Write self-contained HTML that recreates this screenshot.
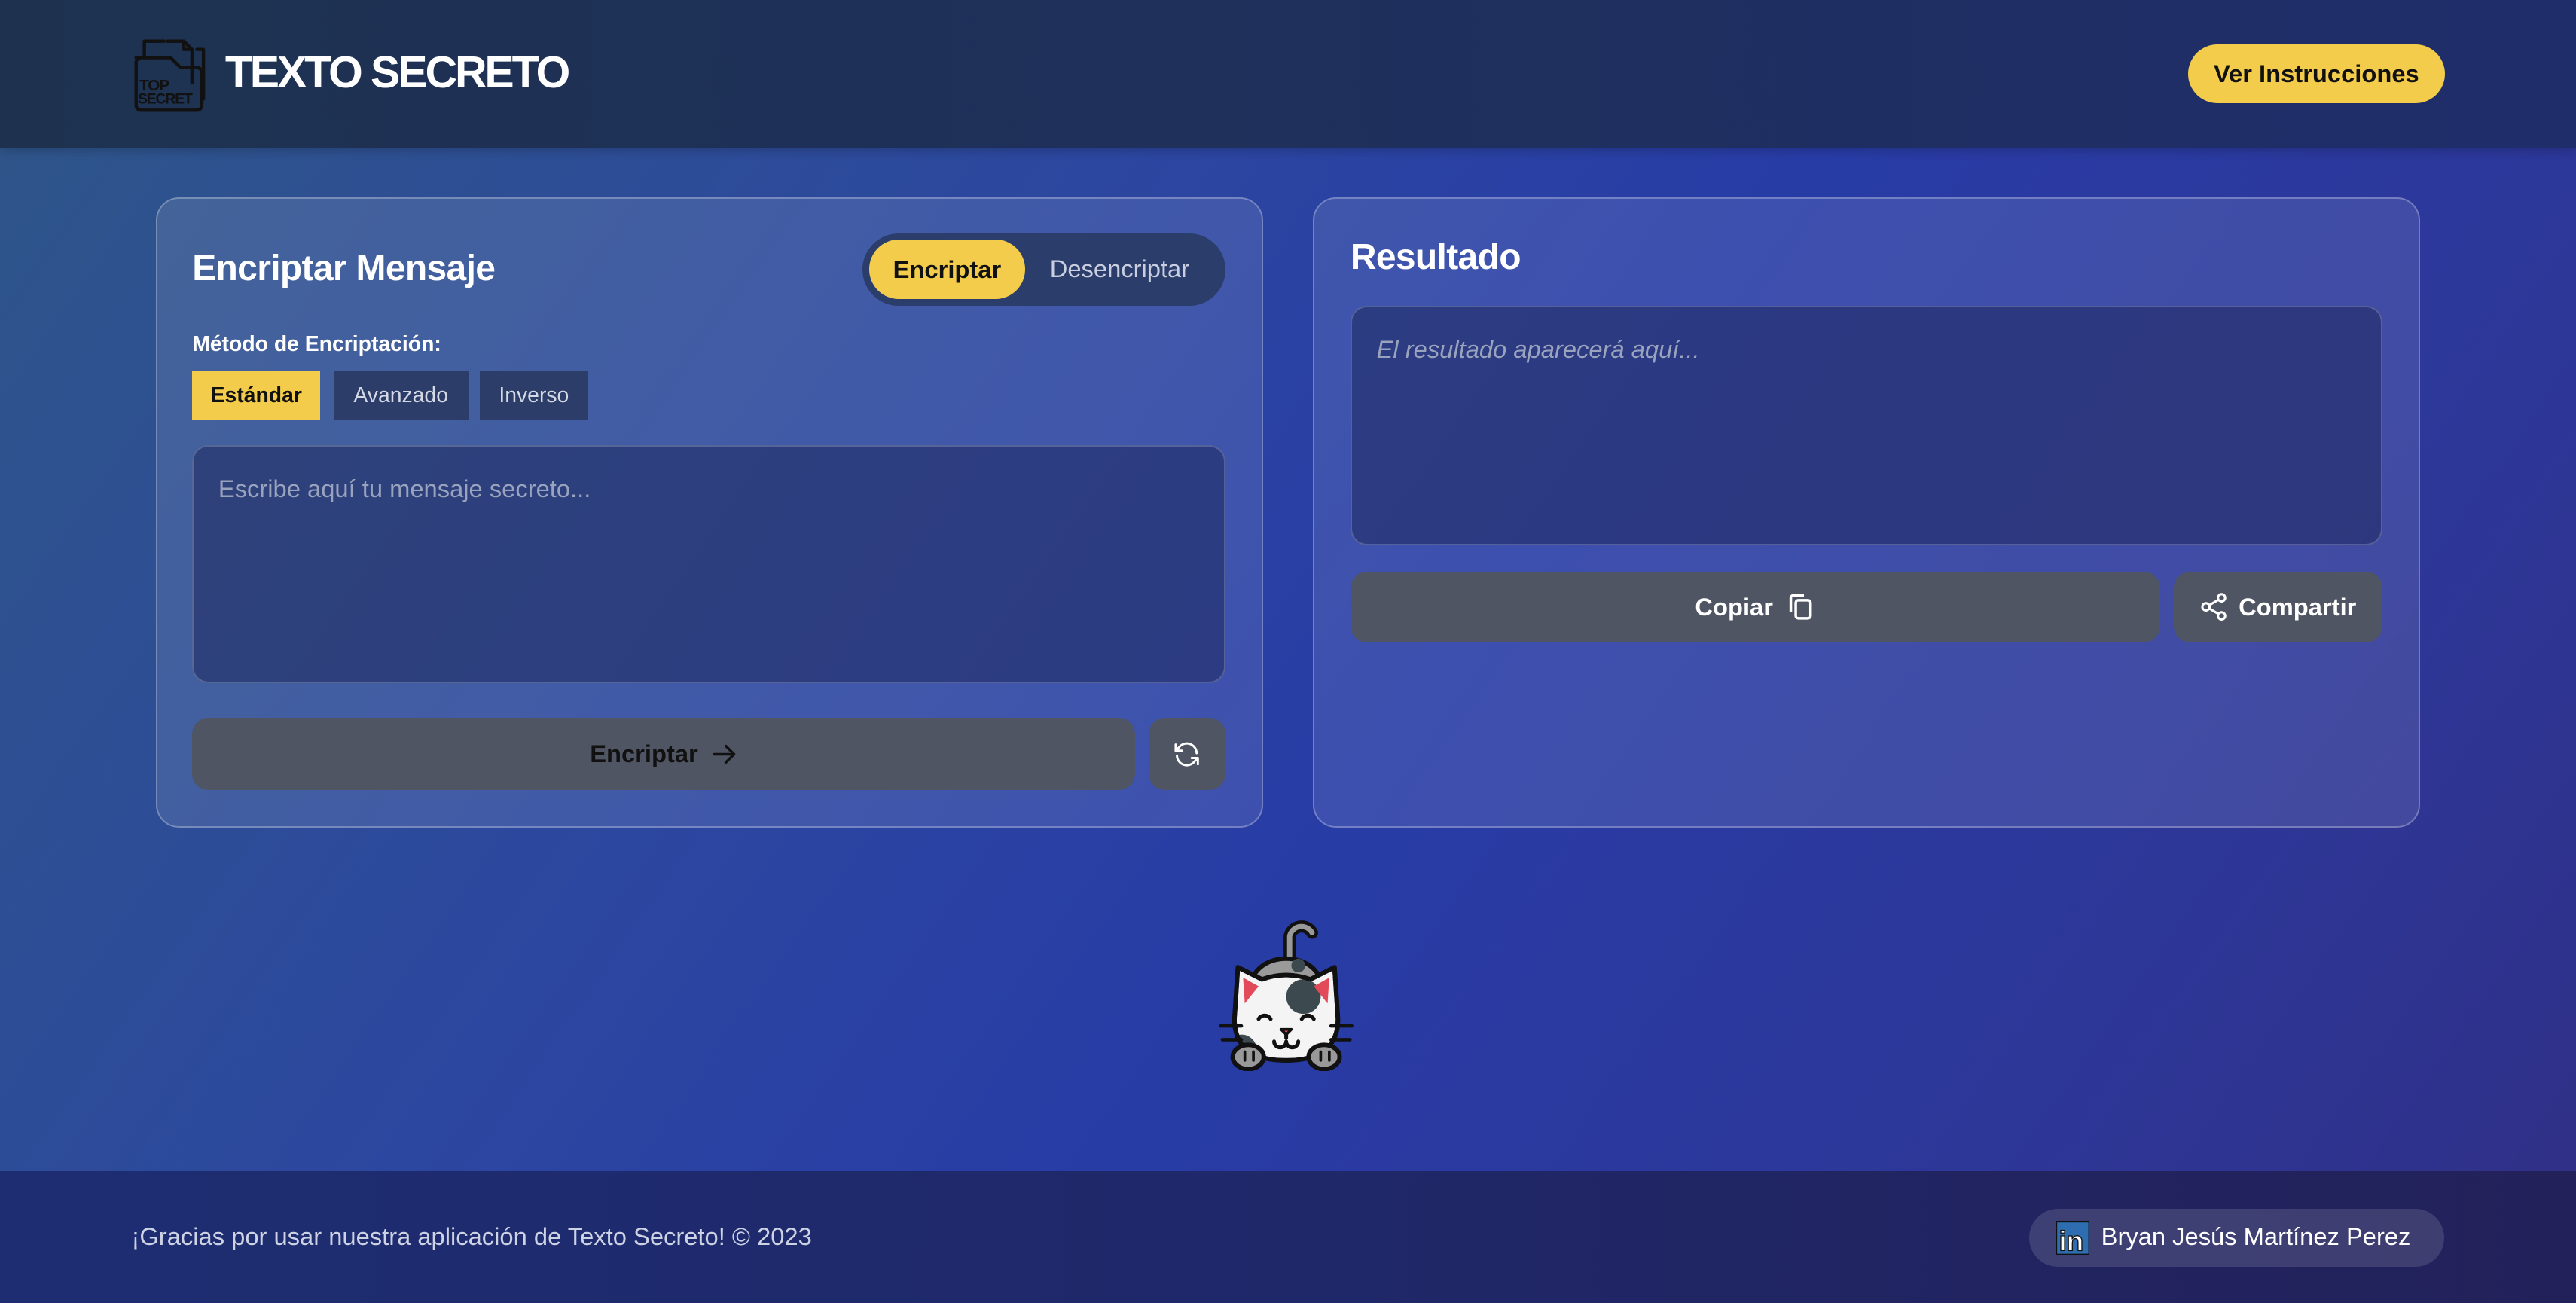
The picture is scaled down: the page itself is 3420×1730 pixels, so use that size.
<!DOCTYPE html>
<html><head><meta charset="utf-8"><style>
html,body{margin:0;padding:0;width:3420px;height:1730px;overflow:hidden}
body{font-family:"Liberation Sans",sans-serif;background:#2a3ea8}
#z{zoom:2.181122;width:1568px;height:793.2px;position:relative;overflow:hidden;
background:linear-gradient(125deg,#2f5688 0%,#2c47a0 35%,#283ca6 55%,#2d3798 80%,#302f85 100%)}
.abs{position:absolute}
header{position:absolute;left:0;top:0;width:1568px;height:90px;background:linear-gradient(90deg,#1e3250,#1f2f5e 60%,#1f2d6b);box-shadow:0 2px 6px rgba(0,0,0,.2)}
.title{left:137px;top:29px;font-size:27px;font-weight:bold;color:#fff;letter-spacing:-1.4px}
.btnY{background:#f2cc4a;color:#111;font-weight:bold;display:flex;align-items:center;justify-content:center}
.panel{background:rgba(255,255,255,.1);border:1px solid rgba(255,255,255,.28);border-radius:14px;box-sizing:border-box}
.h2{font-size:22px;font-weight:bold;color:#fff;letter-spacing:-0.3px}
.ta{background:rgba(30,40,95,.55);border:1px solid rgba(255,255,255,.2);border-radius:10px;box-sizing:border-box;color:#9aa3bd;font-size:15px;padding:17px 15px}
.gb{background:#4f5563;border-radius:10px;color:#fff;font-weight:bold;font-size:15px;display:flex;align-items:center;justify-content:center;gap:8px}
.m{top:226px;height:30px;font-size:13px;display:flex;align-items:center;justify-content:center;background:#2b3d68;color:#d5d9e6}
footer{position:absolute;left:0;top:713px;width:1568px;height:81px;background:linear-gradient(90deg,#1e2d72,#1f2869 50%,#23215a)}
</style></head><body><div id="z">
<header>
<svg class="abs" style="left:79px;top:21px" width="48" height="48" viewBox="0 0 48 48" fill="none" stroke="#111" stroke-width="2" stroke-linecap="round" stroke-linejoin="round">
<path d="M9 14V4h12M23 4h10l5 5v20"/>
<path d="M33 4v5h5M41 9h4v30"/>
<path d="M4 14h21l6 6h10a3 3 0 0 1 3 3v20a3 3 0 0 1-3 3H7a3 3 0 0 1-3-3V17a3 3 0 0 1 3-3z"/>
<text x="6" y="34" font-family="Liberation Sans" font-size="9.5" fill="#111" stroke="none" font-weight="bold" letter-spacing="-0.5">TOP</text>
<text x="5" y="42" font-family="Liberation Sans" font-size="9" fill="#111" stroke="none" font-weight="bold" letter-spacing="-0.6">SECRET</text>
</svg>
<div class="abs title">TEXTO SECRETO</div>
<div class="abs btnY" style="left:1332px;top:27px;width:156px;height:36px;border-radius:18px;font-size:15px">Ver Instrucciones</div>
</header>

<div class="abs panel" style="left:95px;top:120px;width:674px;height:384px"></div>
<div class="abs h2" style="left:117px;top:151px">Encriptar Mensaje</div>
<div class="abs" style="left:525px;top:142px;width:221px;height:44px;border-radius:22px;background:#2b3d6b"></div>
<div class="abs btnY" style="left:529px;top:146px;width:95px;height:36px;border-radius:18px;font-size:15px">Encriptar</div>
<div class="abs" style="left:639px;top:155px;font-size:15px;color:#c9cfe0">Desencriptar</div>
<div class="abs" style="left:117px;top:202px;font-size:13px;font-weight:bold;color:#fff">Método de Encriptación:</div>
<div class="abs m" style="left:117px;width:78px;background:#f2cc4a;color:#111;font-weight:bold">Estándar</div>
<div class="abs m" style="left:203px;width:82px">Avanzado</div>
<div class="abs m" style="left:292px;width:66px">Inverso</div>
<div class="abs ta" style="left:117px;top:271px;width:629px;height:145px">Escribe aquí tu mensaje secreto...</div>
<div class="abs gb" style="left:117px;top:437px;width:574px;height:44px;color:#111">Encriptar
<svg width="16" height="16" viewBox="0 0 16 16" fill="none" stroke="#111" stroke-width="1.6" stroke-linecap="round" stroke-linejoin="round"><path d="M2 8h12M9 3l5 5-5 5"/></svg></div>
<div class="abs gb" style="left:699px;top:437px;width:47px;height:44px">
<svg width="18" height="18" viewBox="0 0 24 24" fill="none" stroke="#fff" stroke-width="1.8" stroke-linecap="round" stroke-linejoin="round"><path d="M20 11a8 8 0 0 0-14.5-4.5L3 9M3 4v5h5M4 13a8 8 0 0 0 14.5 4.5L21 15M21 20v-5h-5"/></svg></div>

<div class="abs panel" style="left:799px;top:120px;width:674px;height:384px"></div>
<div class="abs h2" style="left:822px;top:144px">Resultado</div>
<div class="abs ta" style="left:822px;top:186px;width:628px;height:146px;font-style:italic">El resultado aparecerá aquí...</div>
<div class="abs gb" style="left:822px;top:348px;width:493px;height:43px">Copiar
<svg width="18" height="18" viewBox="0 0 18 18" fill="none" stroke="#fff" stroke-width="1.6" stroke-linejoin="round"><rect x="6" y="5" width="9" height="11" rx="1.5"/><path d="M3 12V3.5A1.5 1.5 0 0 1 4.5 2H11"/></svg></div>
<div class="abs gb" style="left:1323px;top:348px;width:127px;height:43px;gap:6px">
<svg width="18" height="18" viewBox="0 0 18 18" fill="none" stroke="#fff" stroke-width="1.4"><circle cx="13.5" cy="3.5" r="2.2"/><circle cx="13.5" cy="14.5" r="2.2"/><circle cx="4" cy="9" r="2.2"/><path d="M6 8l5.6-3.3M6 10l5.6 3.3"/></svg>Compartir</div>

<svg class="abs" style="left:741px;top:557px" width="84" height="95" viewBox="0 0 80 90" stroke="#111" stroke-width="2.6" stroke-linecap="round" stroke-linejoin="round">
<defs><clipPath id="hc"><path d="M10 60 L12 30 L26 37 Q40 32 54 37 L68 30 L70 60 Q70 84 40 84 Q10 84 10 60z"/></clipPath></defs>
<path d="M42 30V12a7 7 0 0 1 13-2" fill="none" stroke-width="7"/>
<path d="M42 30V12a7 7 0 0 1 13-2" fill="none" stroke="#999" stroke-width="3"/>
<ellipse cx="40" cy="40" rx="20" ry="15" fill="#9a9a9a"/>
<circle cx="47" cy="29" r="4" fill="#3c4a4f" stroke="none"/>
<path d="M10 60 L12 30 L26 37 Q40 32 54 37 L68 30 L70 60 Q70 84 40 84 Q10 84 10 60z" fill="#f4f4f4"/>
<g clip-path="url(#hc)" stroke="none"><circle cx="50" cy="47" r="10" fill="#3c4a4f"/><circle cx="14" cy="78" r="9" fill="#3c4a4f"/></g>
<path d="M10 60 L12 30 L26 37 Q40 32 54 37 L68 30 L70 60 Q70 84 40 84 Q10 84 10 60z" fill="none"/>
<path d="M15 36l9 5-8 10z" fill="#e24a5a" stroke="none"/>
<path d="M65 36l-9 5 8 10z" fill="#e24a5a" stroke="none"/>
<path d="M24 60a4 4 0 0 1 7 0M49 60a4 4 0 0 1 7 0" fill="none" stroke-width="2.2"/>
<path d="M37 66h6l-3 3z" fill="#e24a5a" stroke-width="1.6"/>
<path d="M40 69v2M33 73a3.5 3.5 0 0 0 7 0a3.5 3.5 0 0 0 7 0" fill="none" stroke-width="2.2"/>
<path d="M2 64h12M3 72h11M66 64h12M66 72h11" stroke-width="2"/>
<ellipse cx="18" cy="82" rx="9" ry="7" fill="#999"/>
<ellipse cx="62" cy="82" rx="9" ry="7" fill="#999"/>
<path d="M16 79v5M21 79v5M60 79v5M65 79v5" stroke-width="1.6"/>
</svg>

<footer>
<div class="abs" style="left:80px;top:31px;font-size:15px;color:#cdd2e4">¡Gracias por usar nuestra aplicación de Texto Secreto! © 2023</div>
<div class="abs" style="left:1235px;top:23px;width:253px;height:35px;border-radius:18px;background:rgba(255,255,255,.13)"></div>
<svg class="abs" style="left:1251px;top:30px" width="21" height="21" viewBox="0 0 21 21"><rect x="0.5" y="0.5" width="20" height="20" fill="#2e6db0" stroke="#111"/><text x="2" y="18" font-family="Liberation Sans" font-weight="bold" font-size="17" fill="#fff" stroke="#111" stroke-width=".6">in</text></svg>
<div class="abs" style="left:1279px;top:31px;font-size:15px;color:#fff">Bryan Jesús Martínez Perez</div>
</footer>
</div></body></html>
